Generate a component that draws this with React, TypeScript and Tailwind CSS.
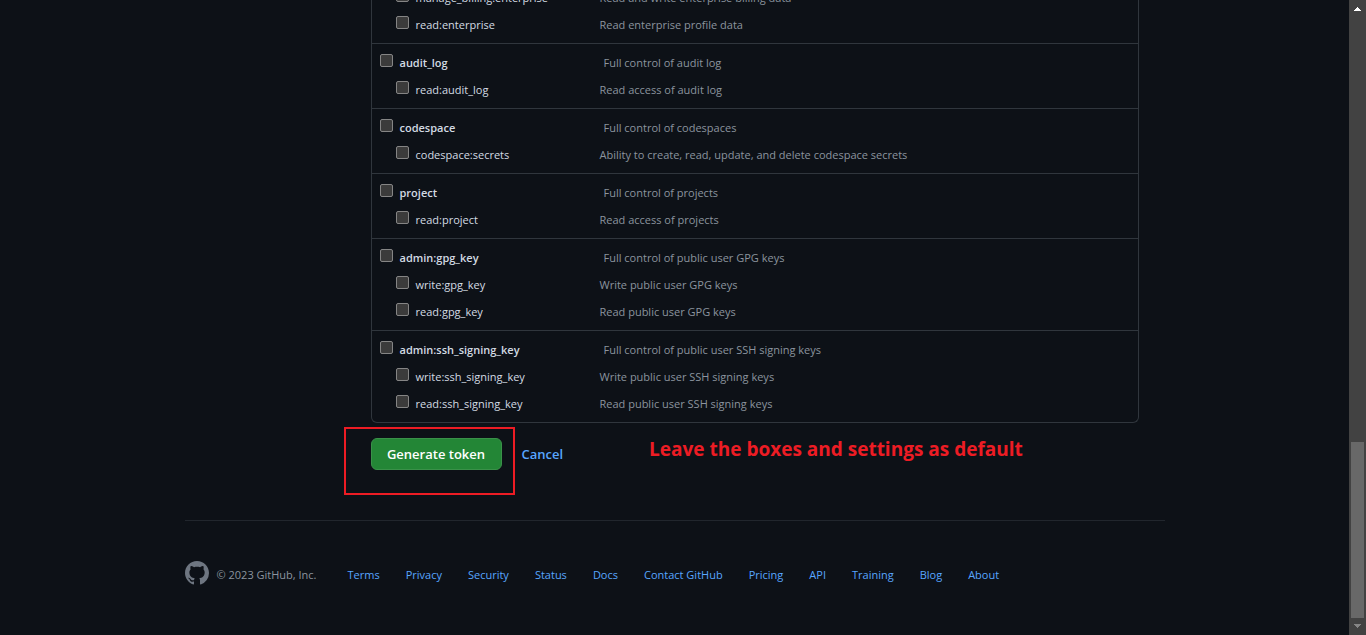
type Scope = { name: string; description: string };
type ScopeGroup = { parent?: Scope; children: Scope[] };

const groups: ScopeGroup[] = [
  {
    children: [
      { name: 'manage_billing:enterprise', description: 'Read and write enterprise billing data' },
      { name: 'read:enterprise', description: 'Read enterprise profile data' },
    ],
  },
  {
    parent: { name: 'audit_log', description: 'Full control of audit log' },
    children: [{ name: 'read:audit_log', description: 'Read access of audit log' }],
  },
  {
    parent: { name: 'codespace', description: 'Full control of codespaces' },
    children: [
      { name: 'codespace:secrets', description: 'Ability to create, read, update, and delete codespace secrets' },
    ],
  },
  {
    parent: { name: 'project', description: 'Full control of projects' },
    children: [{ name: 'read:project', description: 'Read access of projects' }],
  },
  {
    parent: { name: 'admin:gpg_key', description: 'Full control of public user GPG keys' },
    children: [
      { name: 'write:gpg_key', description: 'Write public user GPG keys' },
      { name: 'read:gpg_key', description: 'Read public user GPG keys' },
    ],
  },
  {
    parent: { name: 'admin:ssh_signing_key', description: 'Full control of public user SSH signing keys' },
    children: [
      { name: 'write:ssh_signing_key', description: 'Write public user SSH signing keys' },
      { name: 'read:ssh_signing_key', description: 'Read public user SSH signing keys' },
    ],
  },
];

const footerLinks = [
  'Terms', 'Privacy', 'Security', 'Status', 'Docs', 'Contact GitHub',
  'Pricing', 'API', 'Training', 'Blog', 'About',
];

function ScopeRow({ scope, parent = false }: { scope: Scope; parent?: boolean }) {
  return (
    <div className="flex h-[27px] items-center">
      <label
        htmlFor={scope.name}
        className={
          parent
            ? 'flex w-[232px] shrink-0 items-center pl-2 font-semibold text-[#d3dbe3]'
            : 'flex w-[228px] shrink-0 items-center pl-6 text-[#d3dbe3]'
        }
      >
        <input
          id={scope.name}
          type="checkbox"
          className="mr-[7px] mb-1 size-[13px] shrink-0 appearance-none rounded-[2px] border border-[#858585] bg-[#3b3b3b] checked:bg-[#1f6feb]"
        />
        {scope.name}
      </label>
      <span className="text-[#8b949e]">{scope.description}</span>
    </div>
  );
}

function ScopeList() {
  return (
    <div className="rounded-b-md border border-t-0 border-[#30363d]">
      {groups.map((group, index) => (
        <div
          key={index}
          className={group.parent ? 'border-t border-[#30363d] py-[5px]' : 'pb-[5px]'}
        >
          {group.parent && <ScopeRow scope={group.parent} parent />}
          {group.children.map((scope) => (
            <ScopeRow key={scope.name} scope={scope} />
          ))}
        </div>
      ))}
    </div>
  );
}

function GitHubMark() {
  return (
    <svg viewBox="0 0 16 16" className="size-6 fill-[#6e7681]" aria-hidden="true">
      <path d="M8 0C3.58 0 0 3.58 0 8c0 3.54 2.29 6.53 5.47 7.59.4.07.55-.17.55-.38 0-.19-.01-.82-.01-1.49-2.01.37-2.53-.49-2.69-.94-.09-.23-.48-.94-.82-1.13-.28-.15-.68-.52-.01-.53.63-.01 1.08.58 1.23.82.72 1.21 1.87.87 2.33.66.07-.52.28-.87.51-1.07-1.78-.2-3.64-.89-3.64-3.95 0-.87.31-1.59.82-2.15-.08-.2-.36-1.02.08-2.12 0 0 .67-.21 2.2.82.64-.18 1.32-.27 2-.27.68 0 1.36.09 2 .27 1.53-1.04 2.2-.82 2.2-.82.44 1.1.16 1.92.08 2.12.51.56.82 1.27.82 2.15 0 3.07-1.87 3.75-3.65 3.95.29.25.54.73.54 1.48 0 1.07-.01 1.93-.01 2.2 0 .21.15.46.55.38A8.013 8.013 0 0 0 16 8c0-4.42-3.58-8-8-8z" />
    </svg>
  );
}

function Footer() {
  return (
    <footer className="mx-auto mt-[50px] w-full max-w-[980px] border-t border-[#21262d] pt-10">
      <div className="flex items-center">
        <a href="#home" aria-label="GitHub">
          <GitHubMark />
        </a>
        <span className="ml-2 pt-1 text-[#8b949e]">© 2023 GitHub, Inc.</span>
        <nav className="ml-[31px] flex gap-[26px] pt-1">
          {footerLinks.map((link) => (
            <a key={link} href="#" className="text-[#58a6ff]">
              {link}
            </a>
          ))}
        </nav>
      </div>
    </footer>
  );
}

function ScrollTrack() {
  return (
    <div className="flex w-[17px] shrink-0 flex-col items-center justify-between bg-[#424242] py-[7px]" aria-hidden="true">
      <svg viewBox="0 0 7 4" className="h-1 w-[7px] fill-white">
        <path d="M3 0h1v1h1v1h1v1h1v1H0V3h1V2h1V1h1z" />
      </svg>
      <div className="flex w-[13px] flex-1 flex-col justify-end pb-[6px]">
        <div className="h-44 bg-[#686868]" />
      </div>
      <svg viewBox="0 0 7 4" className="h-1 w-[7px] fill-[#868686]">
        <path d="M0 0h7v1H6v1H5v1H4v1H3V3H2V2H1V1H0z" />
      </svg>
    </div>
  );
}

export default function App() {
  return (
    <div className="flex h-screen overflow-hidden bg-[#0d1117] font-['Open_Sans','Noto_Sans',sans-serif] text-[11px] leading-[18px]">
      <div className="min-w-0 flex-1 overflow-hidden">
        <main className="mx-auto w-full max-w-[980px] pr-[26px] pl-[186px]">
          <form className="-mt-4" onSubmit={(event) => event.preventDefault()}>
            <ScopeList />
            <div className="mt-[15px] flex items-center text-[13px] font-semibold">
              <div className="relative">
                <button
                  type="submit"
                  className="h-8 w-[131px] rounded-md border border-[#3a9149] bg-[#238636] whitespace-nowrap text-white"
                >
                  Generate token
                </button>
                <div className="pointer-events-none absolute -top-[11px] -right-[13px] -bottom-[25px] -left-[27px] border-2 border-[#ed1c24]" />
              </div>
              <a href="#cancel" className="ml-5 text-[#58a6ff]">
                Cancel
              </a>
              <p className="mb-[10px] ml-[86px] text-[19px] leading-5 font-bold whitespace-nowrap text-[#ed1c24]">
                Leave the boxes and settings as default
              </p>
            </div>
          </form>
        </main>
        <Footer />
      </div>
      <ScrollTrack />
    </div>
  );
}
